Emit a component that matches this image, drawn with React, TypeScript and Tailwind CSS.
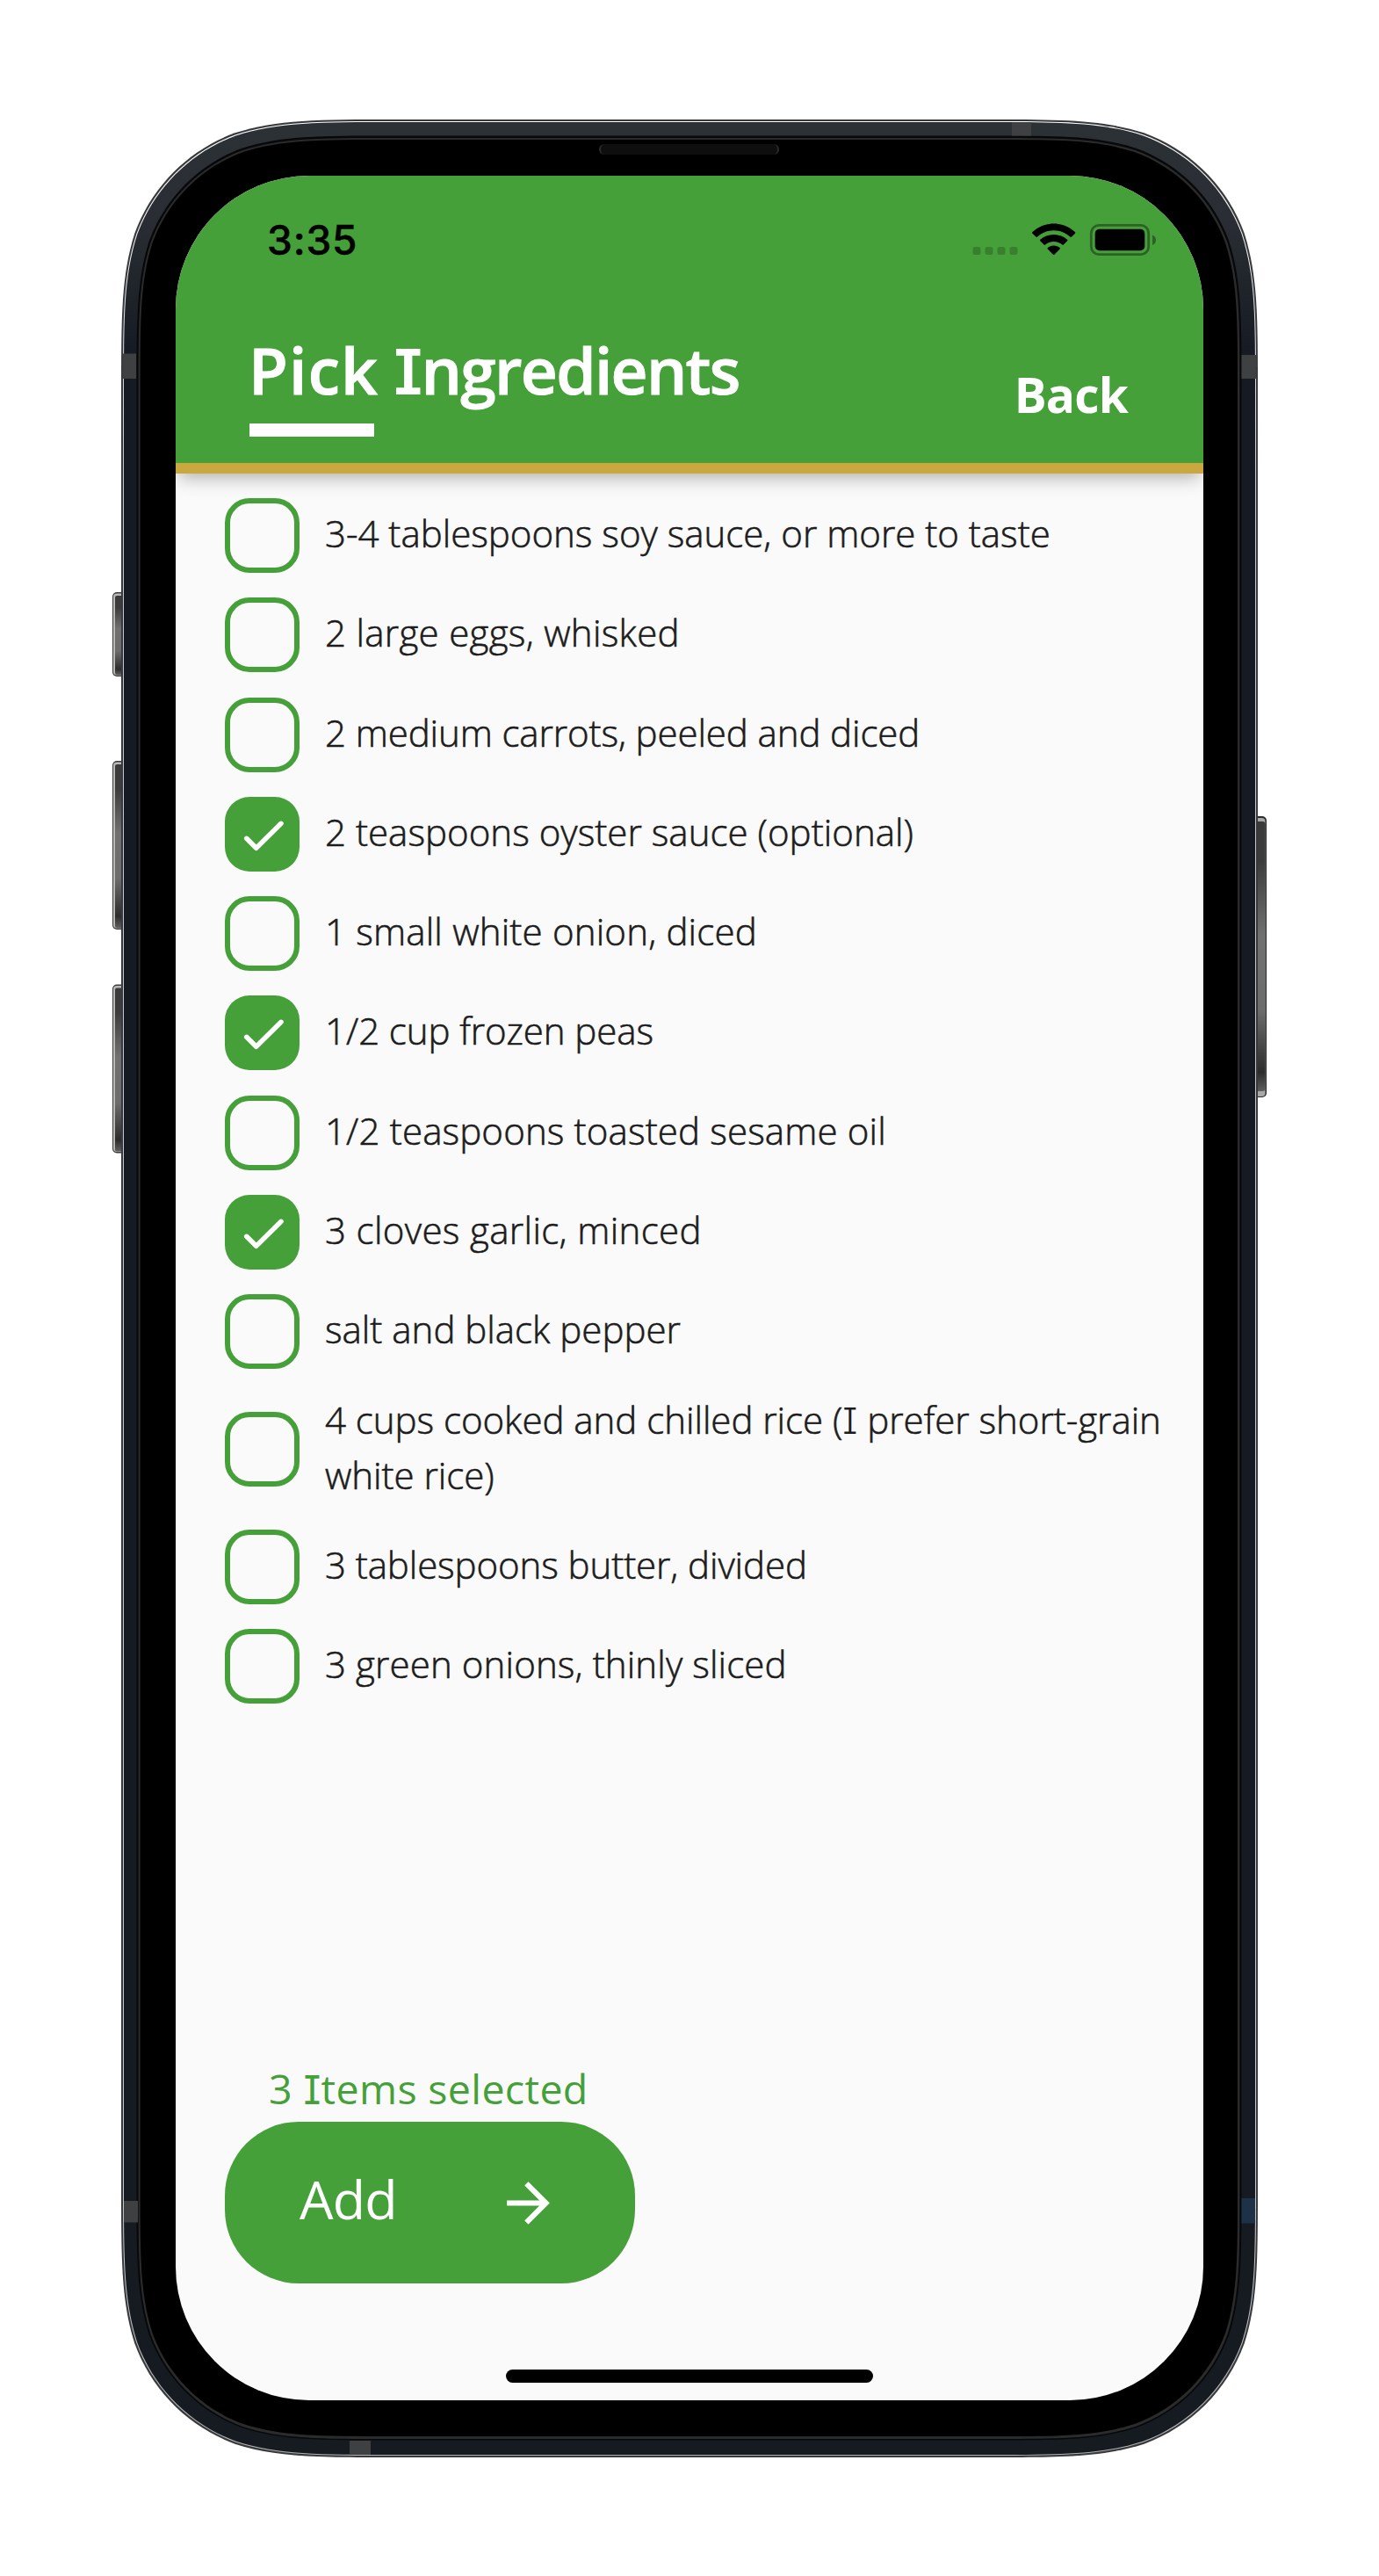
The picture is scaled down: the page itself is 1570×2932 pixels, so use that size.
import { Fragment } from 'react';

type Ingredient = { name: string; checked?: boolean; tracking: string };

const ingredients: Ingredient[] = [
  { name: '3-4 tablespoons soy sauce, or more to taste', tracking: 'tracking-[0px]' },
  { name: '2 large eggs, whisked', tracking: 'tracking-[0.3px]' },
  { name: '2 medium carrots, peeled and diced', tracking: 'tracking-[-0.1px]' },
  { name: '2 teaspoons oyster sauce (optional)', checked: true, tracking: 'tracking-[0.03px]' },
  { name: '1 small white onion, diced', tracking: 'tracking-[0.18px]' },
  { name: '1/2 cup frozen peas', checked: true, tracking: 'tracking-[-0.08px]' },
  { name: '1/2 teaspoons toasted sesame oil', tracking: 'tracking-[0.14px]' },
  { name: '3 cloves garlic, minced', checked: true, tracking: 'tracking-[0.36px]' },
  { name: 'salt and black pepper', tracking: 'tracking-[0.01px]' },
  { name: '4 cups cooked and chilled rice (I prefer short-grain white rice)', tracking: 'tracking-[-0.02px]' },
  { name: '3 tablespoons butter, divided', tracking: 'tracking-[-0.09px]' },
  { name: '3 green onions, thinly sliced', tracking: 'tracking-[0.12px]' },
];

// Sets every capital I with slab serifs so that it reads apart from a lowercase l.
function SlabText({ text }: { text: string }) {
  return (
    <>
      {text.split(/(I)/).map((part, i) =>
        part === 'I' ? (
          <span
            key={i}
            className="font-[Inter] text-[0.97em] leading-none [-webkit-text-stroke:0] [font-feature-settings:'cv08']"
          >
            I
          </span>
        ) : (
          <Fragment key={i}>{part}</Fragment>
        ),
      )}
    </>
  );
}

function Bezel() {
  const corner = (x0: number, y0: number, x1: number, y1: number, r: number) => {
    const a = 1.528665 * r;
    const b = 1.08849296 * r;
    const c = 0.86840694 * r;
    const d = 0.63149379 * r;
    const e = 0.37282383 * r;
    const f = 0.16905956 * r;
    const g = 0.07491139 * r;
    return [
      `M${x0 + a} ${y0}H${x1 - a}`,
      `C${x1 - b} ${y0} ${x1 - c} ${y0} ${x1 - d} ${y0 + g}`,
      `C${x1 - e} ${y0 + f} ${x1 - f} ${y0 + e} ${x1 - g} ${y0 + d}`,
      `C${x1} ${y0 + c} ${x1} ${y0 + b} ${x1} ${y0 + a}V${y1 - a}`,
      `C${x1} ${y1 - b} ${x1} ${y1 - c} ${x1 - g} ${y1 - d}`,
      `C${x1 - f} ${y1 - e} ${x1 - e} ${y1 - f} ${x1 - d} ${y1 - g}`,
      `C${x1 - c} ${y1} ${x1 - b} ${y1} ${x1 - a} ${y1}H${x0 + a}`,
      `C${x0 + b} ${y1} ${x0 + c} ${y1} ${x0 + d} ${y1 - g}`,
      `C${x0 + e} ${y1 - f} ${x0 + f} ${y1 - e} ${x0 + g} ${y1 - d}`,
      `C${x0} ${y1 - c} ${x0} ${y1 - b} ${x0} ${y1 - a}V${y0 + a}`,
      `C${x0} ${y0 + b} ${x0} ${y0 + c} ${x0 + g} ${y0 + d}`,
      `C${x0 + f} ${y0 + e} ${x0 + e} ${y0 + f} ${x0 + d} ${y0 + g}`,
      `C${x0 + c} ${y0} ${x0 + b} ${y0} ${x0 + a} ${y0}Z`,
    ].join('');
  };
  const leftButtons = [
    [674, 96],
    [866, 192],
    [1120.5, 192],
  ];
  return (
    <svg className="absolute inset-0" width="1570" height="2932" viewBox="0 0 1570 2932" aria-hidden="true">
      <defs>
        <linearGradient id="metal" x1="0" y1="0" x2="0" y2="1">
          <stop offset="0" stopColor="#3a3a3a" />
          <stop offset="0.15" stopColor="#3c3c3c" />
          <stop offset="0.42" stopColor="#707070" />
          <stop offset="0.7" stopColor="#6c6c6c" />
          <stop offset="0.93" stopColor="#2c2c2c" />
          <stop offset="1" stopColor="#5e5e5e" />
        </linearGradient>
        <linearGradient id="frame" x1="0" y1="0" x2="0" y2="1">
          <stop offset="0" stopColor="#2c3136" />
          <stop offset="0.04" stopColor="#2a2e34" />
          <stop offset="0.1" stopColor="#161b23" />
          <stop offset="1" stopColor="#161b22" />
        </linearGradient>
        <linearGradient id="rim" x1="0" y1="0" x2="0" y2="1">
          <stop offset="0" stopColor="#ffffff" />
          <stop offset="0.15" stopColor="#c4c6d2" />
          <stop offset="0.9" stopColor="#c4c6d2" />
          <stop offset="1" stopColor="#b0b0b0" />
        </linearGradient>
      </defs>
      {leftButtons.map(([y, h]) => (
        <g key={y}>
          <rect x="128" y={y} width="16" height={h} rx="5" fill="#3c3c3c" />
          <rect x="129" y={y + 1.5} width="14" height={h - 3} rx="4" fill="#b9b9b5" />
          <rect x="131" y={y + 4} width="12" height={h - 6} rx="2" fill="url(#metal)" />
        </g>
      ))}
      <rect x="1426" y="929" width="16" height="320" rx="5" fill="#2a2a2a" />
      <rect x="1426" y="931" width="14.5" height="317" rx="4" fill="#a8a8a8" />
      <rect x="1426" y="935" width="14.5" height="307" rx="3" fill="url(#metal)" />
      <path d={corner(138, 136, 1432, 2797, 205)} fill="#38393b" />
      <path d={corner(140, 138, 1430, 2795, 203.5)} fill="url(#rim)" />
      <path d={corner(141, 139, 1429, 2794, 202.8)} fill="url(#frame)" />
      <path d={corner(155.5, 154.5, 1413.5, 2777.5, 190)} fill="#06080a" />
      <path d={corner(157.6, 157, 1411.4, 2776, 188)} fill="#2b2b2b" />
      <path d={corner(159.6, 159, 1409, 2773, 186)} fill="#000" />
      <g fill="#3f4041">
        <rect x="139.5" y="402.5" width="15.5" height="28.5" />
        <rect x="1413.5" y="404" width="17" height="27" />
        <rect x="1152" y="139" width="22" height="15.5" />
        <rect x="141" y="2505" width="16" height="24.5" />
        <rect x="398" y="2778" width="24" height="16" />
      </g>
      <rect x="1413.5" y="2502" width="15.5" height="28.5" fill="#1d3248" />
    </svg>
  );
}

function Notch() {
  return (
    <div className="absolute left-[343px] top-0 h-[102px] w-[484px] rounded-b-[60px] bg-black">
      <svg className="absolute -left-[15px] top-0" width="514" height="15" viewBox="0 0 514 15" aria-hidden="true">
        <path d="M0 0H16V15H15A15 15 0 0 0 0 0ZM514 0H498V15H499A15 15 0 0 1 514 0Z" fill="#000" />
      </svg>
      <div className="absolute -top-[36px] left-[139px] h-[12px] w-[205px] rounded-full border-x-2 border-[#2c2c2c] bg-[#0e0e0e]" />
      <svg className="absolute left-[44px] top-[14px]" width="44" height="44" viewBox="0 0 44 44" aria-hidden="true">
        <circle cx="22" cy="22" r="22" fill="#0f0f0f" />
        <circle cx="22" cy="22" r="14" fill="#070707" />
        <circle cx="22" cy="22" r="12.5" fill="#141213" />
        <path d="M16.5 11Q7 20 12.5 31L16.5 32Q14 21 18 11Z" fill="#4f7f6a" />
        <path d="M28 10.500Q38 20 33 30L26 30Q32 21 27 11Z" fill="#174680" />
        <circle cx="22" cy="22" r="5" fill="#080808" />
        <circle cx="16.500" cy="15.500" r="2.500" fill="#9fb5aa" />
        <circle cx="28.500" cy="29" r="3.600" fill="#cfcbdc" />
      </svg>
    </div>
  );
}

function StatusBar() {
  return (
    <div className="flex h-[181px] items-start justify-between pl-[104px] pr-[54px]">
      <span className="mt-[45px] font-[Inter] text-[46px] font-medium leading-[56px] tracking-[0.8px] text-black [-webkit-text-stroke:0.5px_#000]">
        3:35
      </span>
      <svg className="mt-[52px]" width="209" height="40" viewBox="1107 252 209 40" aria-hidden="true">
        <g fill="#39802e">
          <rect x="1107.500" y="281" width="9" height="9" rx="2.500" />
          <rect x="1121.500" y="281" width="9" height="9" rx="2.500" />
          <rect x="1135.500" y="281" width="9" height="9" rx="2.500" />
          <rect x="1149.500" y="281" width="9" height="9" rx="2.500" />
        </g>
        <path
          d="M1199.700 254.400C1209 254.400 1217.500 258 1223.900 264.100Q1224.700 264.900 1224 265.700L1219.700 269.700Q1219 270.200 1218.300 269.600C1213.400 265 1206.900 262.300 1199.700 262.300S1186 265 1181.100 269.600Q1180.400 270.200 1179.700 269.700L1175.400 265.700Q1174.700 264.900 1175.500 264.100C1181.900 258 1190.400 254.400 1199.700 254.400Z"
        />
        <path
          d="M1199.700 267C1205.600 267 1211 269.200 1215.100 272.800Q1215.900 273.600 1215.100 274.300L1210.800 278.400Q1210.100 279 1209.400 278.400C1206.800 276.200 1203.400 274.900 1199.700 274.900S1192.600 276.200 1190 278.400Q1189.300 279 1188.600 278.400L1184.300 274.300Q1183.500 273.600 1184.300 272.800C1188.400 269.200 1193.800 267 1199.700 267Z"
        />
        <path d="M1199.700 279.600C1202.300 279.600 1204.700 280.500 1206.600 282Q1207.300 282.700 1206.600 283.400L1200.400 289.700Q1199.700 290.400 1199 289.700L1192.800 283.400Q1192.100 282.700 1192.800 282C1194.700 280.500 1197.100 279.600 1199.700 279.600Z" />
        <rect x="1242.300" y="256.300" width="65.400" height="33.400" rx="9" fill="none" stroke="#2b6324" strokeWidth="2.800" />
        <rect x="1246.700" y="260.800" width="56.600" height="24.400" rx="5" />
        <path d="M1312 267.500Q1316 269 1316 273.200T1312 279Z" fill="#2b6324" />
      </svg>
    </div>
  );
}

function Header() {
  return (
    <header className="relative z-10 h-[339px] border-b-[12px] border-[#caa83f] bg-[#46a039] font-['Open_Sans'] text-white shadow-[0_8px_20px_-4px_rgba(0,0,0,0.32)]">
      <StatusBar />
      <div className="-mt-[4px] flex justify-between pl-[84px] pr-[86px]">
        <div>
          <h1 className="-ml-[1px] text-[73px] font-semibold leading-[88px] [-webkit-text-stroke:1px_#fff]">
            <span className="tracking-[1.2px]">Pick</span>
            <span className="tracking-[-1.7px]">
              <SlabText text=" Ingredients" />
            </span>
          </h1>
          <div className="mt-[17px] h-[14.500px] w-[142px] bg-white" />
        </div>
        <span className="mt-[36px] text-[55px] font-bold leading-[72px] tracking-[-0.8px]">Back</span>
      </div>
    </header>
  );
}

function Checkbox({ checked }: { checked?: boolean }) {
  return (
    <div
      className={
        checked
          ? 'size-[85px] shrink-0 rounded-[28px] bg-[#46a039]'
          : 'size-[85px] shrink-0 rounded-[28px] border-[6px] border-[#46a039]'
      }
    >
      {checked && (
        <svg width="85" height="85" viewBox="0 0 85 85" fill="none" aria-hidden="true">
          <path
            d="M24.700 47.300L35.700 58.300L64 30.300"
            stroke="#fff"
            strokeWidth="5.500"
            strokeLinecap="round"
            strokeLinejoin="round"
          />
        </svg>
      )}
    </div>
  );
}

export default function App() {
  return (
    <div className="relative h-[2932px] w-[1570px] bg-white px-[200px] pt-[200px]">
      <Bezel />
      <main className="relative flex h-[2532px] w-[1170px] flex-col rounded-[152px] bg-[#fafafa]">
        <div className="overflow-clip rounded-t-[152px] pb-[40px]">
          <Header />
        </div>
        <Notch />
        <ul className="-mt-[12px] flex flex-col gap-[28.300px] pl-[56px] pr-[30px] font-['Open_Sans'] text-[42px] font-light leading-[63px] text-[#1c1c1c] [-webkit-text-stroke:0.6px_#1c1c1c]">
          {ingredients.map((item) => (
            <li key={item.name} className="flex items-center gap-[29px]">
              <Checkbox checked={item.checked} />
              <span className={`-translate-y-[3px] ${item.tracking}`}>
                <SlabText text={item.name} />
              </span>
            </li>
          ))}
        </ul>
        <footer className="mt-auto flex flex-col items-start pb-[133px] pl-[56px] font-['Open_Sans']">
          <p className="ml-[50px] text-[46.500px] leading-[70px] tracking-[0.35px] text-[#46a039]">
            <SlabText text="3 Items selected" />
          </p>
          <button className="mt-[3px] flex h-[184px] w-[467px] items-center justify-between rounded-[84px] bg-[#46a039] pl-[85px] pr-[85px] text-[61px] leading-[80px] tracking-[-0.8px] text-white">
            <span className="-translate-y-[4px]">Add</span>
            <svg width="73" height="73" viewBox="0 0 24 24" fill="#fff" aria-hidden="true">
              <path d="M12 4l-1.410 1.410L16.170 11H4v2h12.170l-5.580 5.590L12 20l8-8z" />
            </svg>
          </button>
        </footer>
        <div className="absolute bottom-[20px] left-[376px] h-[15px] w-[418px] rounded-full bg-black" />
      </main>
    </div>
  );
}
